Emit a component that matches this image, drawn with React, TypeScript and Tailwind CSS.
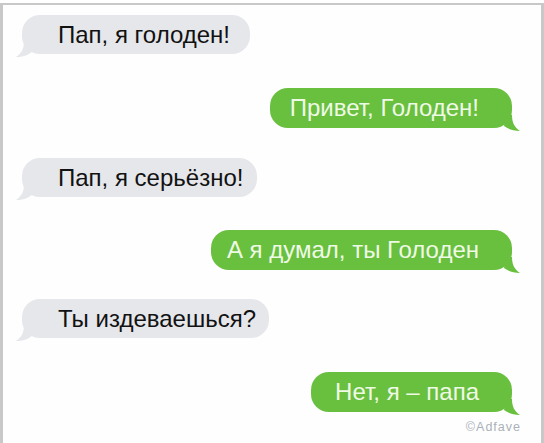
import React from 'react'

type Msg = { text: string; me: boolean; mt: string; pl?: string }

const messages: Msg[] = [
  { text: 'Пап, я голоден!', me: false, mt: 'mt-[10px]', pl: 'pr-[20px]' },
  { text: 'Привет, Голоден!', me: true, mt: 'mt-[34px]', pl: 'pl-[20px]' },
  { text: 'Пап, я серьёзно!', me: false, mt: 'mt-[30px]', pl: 'pr-[14px]' },
  { text: 'А я думал, ты Голоден', me: true, mt: 'mt-[33px]', pl: 'pl-[16px]' },
  { text: 'Ты издеваешься?', me: false, mt: 'mt-[29px]', pl: 'pr-[13px]' },
  { text: 'Нет, я – папа', me: true, mt: 'mt-[34px]', pl: 'pl-[24px]' },
]

function Bubble({ msg }: { msg: Msg }) {
  if (msg.me) {
    return (
      <div className={`flex justify-end pr-[29px] ${msg.mt}`}>
        <div
          className={`relative h-[40px] flex items-center rounded-[18px] bg-[#69bf3e] text-[#effae6] pr-[33px] ${msg.pl}`}
        >
          <span className="relative z-10">{msg.text}</span>
          <svg
            className="absolute -right-[8px] -bottom-[3px]"
            width="18"
            height="16"
            viewBox="0 0 18 16"
          >
            <path d="M4 0 L10 0 C10 7 12 12 18 16 C11 16 6 14 2 11 Z" fill="#69bf3e" />
          </svg>
        </div>
      </div>
    )
  }
  return (
    <div className={`flex justify-start pl-[19px] ${msg.mt}`}>
      <div
        className={`relative h-[39px] flex items-center rounded-[18px] bg-[#e6e7eb] text-[#121212] pl-[36px] ${msg.pl}`}
      >
        <span className="relative z-10">{msg.text}</span>
        <svg
          className="absolute -left-[6px] -bottom-[3px]"
          width="18"
          height="16"
          viewBox="0 0 18 16"
        >
          <path d="M14 0 L8 0 C8 7 6 12 0 16 C7 16 12 14 16 11 Z" fill="#e6e7eb" />
        </svg>
      </div>
    </div>
  )
}

export default function App() {
  return (
    <div className="w-[544px] h-[443px] bg-white pt-[3px] overflow-hidden font-['Liberation_Sans',Arial,sans-serif]">
      <div className="h-full border-t-2 border-x-[3px] border-[#c8c8c8] bg-[#fefefe] flex flex-col text-[24px] leading-none">
        {messages.map((m, i) => (
          <Bubble key={i} msg={m} />
        ))}
        <div className="flex justify-end pr-[20px] mt-[9px]">
          <span className="text-[12.5px] tracking-[1px] text-[#a9b1b9]">©Adfave</span>
        </div>
      </div>
    </div>
  )
}
